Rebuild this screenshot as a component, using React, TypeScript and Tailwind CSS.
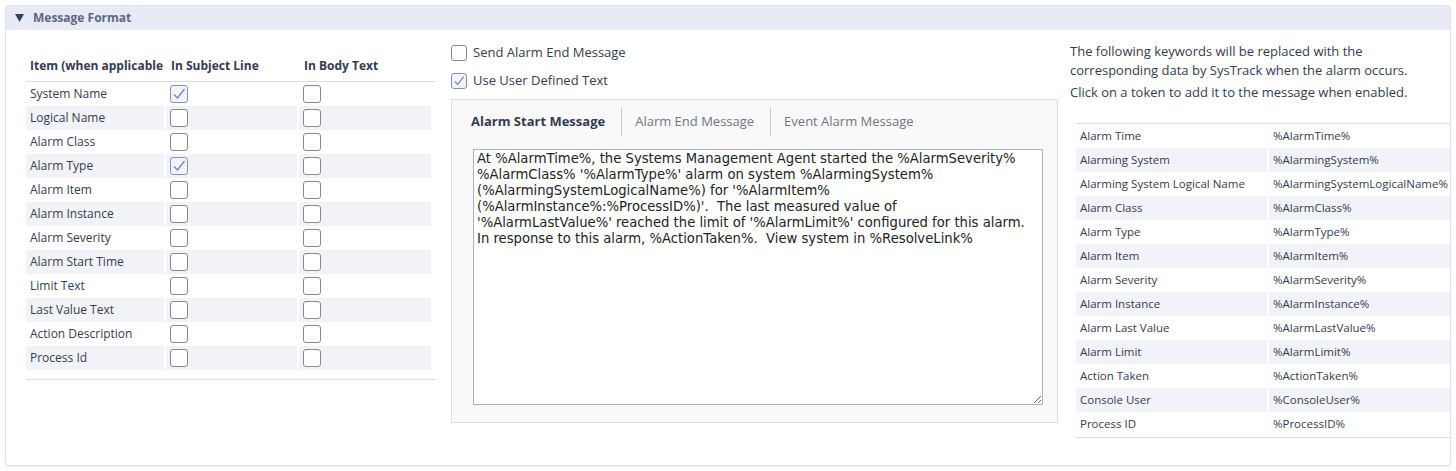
import React from 'react';

const items = [
  { name: 'System Name', subject: true },
  { name: 'Logical Name', subject: false },
  { name: 'Alarm Class', subject: false },
  { name: 'Alarm Type', subject: true },
  { name: 'Alarm Item', subject: false },
  { name: 'Alarm Instance', subject: false },
  { name: 'Alarm Severity', subject: false },
  { name: 'Alarm Start Time', subject: false },
  { name: 'Limit Text', subject: false },
  { name: 'Last Value Text', subject: false },
  { name: 'Action Description', subject: false },
  { name: 'Process Id', subject: false },
];

const tokens = [
  ['Alarm Time', '%AlarmTime%'],
  ['Alarming System', '%AlarmingSystem%'],
  ['Alarming System Logical Name', '%AlarmingSystemLogicalName%'],
  ['Alarm Class', '%AlarmClass%'],
  ['Alarm Type', '%AlarmType%'],
  ['Alarm Item', '%AlarmItem%'],
  ['Alarm Severity', '%AlarmSeverity%'],
  ['Alarm Instance', '%AlarmInstance%'],
  ['Alarm Last Value', '%AlarmLastValue%'],
  ['Alarm Limit', '%AlarmLimit%'],
  ['Action Taken', '%ActionTaken%'],
  ['Console User', '%ConsoleUser%'],
  ['Process ID', '%ProcessID%'],
];

const message =
  "At %AlarmTime%, the Systems Management Agent started the %AlarmSeverity%\n" +
  "%AlarmClass% '%AlarmType%' alarm on system %AlarmingSystem%\n" +
  "(%AlarmingSystemLogicalName%) for '%AlarmItem%\n" +
  "(%AlarmInstance%:%ProcessID%)'.  The last measured value of\n" +
  "'%AlarmLastValue%' reached the limit of '%AlarmLimit%' configured for this alarm.\n" +
  "In response to this alarm, %ActionTaken%.  View system in %ResolveLink%";

function Box({ checked, size = 18 }: { checked: boolean; size?: number }) {
  return (
    <div
      className={
        'flex items-center justify-center rounded-[3px] border-[1.5px] ' +
        (checked ? 'border-[#8391c0] bg-[#f3f4fa]' : 'border-[#888888] bg-white')
      }
      style={{ width: size, height: size }}
    >
      {checked && (
        <svg width={size - 4} height={size - 4} viewBox="0 0 14 14" fill="none">
          <path d="M2 7.5 L5.5 11 L12.5 2" stroke="#7385c0" strokeWidth="1.4" />
        </svg>
      )}
    </div>
  );
}

export default function App() {
  return (
    <div className="w-[1456px] h-[471px] bg-white pt-[5px] pl-[5px] text-[#353b50]" style={{ fontFamily: '"Open Sans", sans-serif' }}>
      <div className="w-[1446px] h-[461px] border border-[#e2e2e2] rounded-[3px] shadow-[0_1px_2px_rgba(0,0,0,0.08)] overflow-hidden">
        {/* Header */}
        <div className="h-[24px] bg-[#e8ebf5] flex items-center pl-[9px] gap-[9px]">
          <svg width="9" height="8" viewBox="0 0 9 8">
            <polygon points="0,0 9,0 4.5,8" fill="#3a4055" />
          </svg>
          <span className="text-[12px] font-bold text-[#5d6681]">Message Format</span>
        </div>

        <div className="flex">
          {/* Left: item table */}
          <div className="w-[410px] ml-[20px] mt-[20px]">
            <div className="grid grid-cols-[138px_131px_132px] gap-x-[2px] h-[32px] items-center border-b border-[#dcdcdc] text-[12px] font-bold">
              <div className="pl-[4px] whitespace-nowrap overflow-hidden">Item (when applicable</div>
              <div className="pl-[5px]">In Subject Line</div>
              <div className="pl-[5px]">In Body Text</div>
            </div>
            {items.map((it, i) => {
              const bg = i % 2 === 1 ? 'bg-[#f2f3f8]' : 'bg-white';
              return (
                <div key={it.name} className="grid grid-cols-[138px_131px_132px] gap-x-[2px] h-[24px] text-[12px]">
                  <div className={bg + ' pl-[4px] flex items-center'}>{it.name}</div>
                  <div className={bg + ' pl-[4px] flex items-center'}>
                    <Box checked={it.subject} />
                  </div>
                  <div className={bg + ' pl-[4px] flex items-center'}>
                    <Box checked={false} />
                  </div>
                </div>
              );
            })}
            <div className="mt-[9px] border-t border-[#dcdcdc]" />
          </div>

          {/* Middle: message editor */}
          <div className="w-[607px] ml-[15px] mt-[9px]">
            <div className="h-[28px] flex items-center gap-[6px] text-[13px]">
              <Box checked={false} size={16} />
              <span>Send Alarm End Message</span>
            </div>
            <div className="h-[28px] flex items-center gap-[6px] text-[13px]">
              <Box checked={true} size={16} />
              <span>Use User Defined Text</span>
            </div>
            <div className="mt-[4px] h-[324px] bg-[#f9f9f9] border border-[#dddddd] pt-[7px]">
              <div className="flex pl-[6px] h-[30px] text-[13px]">
                <div className="pl-[13px] pr-[16px] flex items-center font-bold">Alarm Start Message</div>
                <div className="pl-[13px] pr-[16px] flex items-center border-l border-[#c9cedb] text-[#6f7588]">Alarm End Message</div>
                <div className="pl-[13px] pr-[16px] flex items-center border-l border-[#c9cedb] text-[#6f7588]">Event Alarm Message</div>
              </div>
              <textarea
                readOnly
                value={message}
                className="block mt-[12px] ml-[21px] w-[570px] h-[256px] border border-[#a9b2c6] bg-white px-[3px] py-[1px] text-[13.2px] leading-[16px] text-[#222] outline-none resize"
                style={{ fontFamily: '"DejaVu Sans", Verdana, sans-serif' }}
              />
            </div>
          </div>

          {/* Right: tokens */}
          <div className="ml-[12px] mt-[12px] flex-1">
            <p className="text-[13px] leading-[19px]">
              The following keywords will be replaced with the
              <br />
              corresponding data by SysTrack when the alarm occurs.
            </p>
            <p className="mt-[3px] text-[13px] leading-[19px] whitespace-nowrap">Click on a token to add it to the message when enabled.</p>
            <div className="mt-[21px] ml-[6px] border-t border-b border-[#dcdcdc] pb-[1px]">
              {tokens.map(([label, tok], i) => {
                const bg = i % 2 === 1 ? 'bg-[#f2f3f8]' : 'bg-white';
                return (
                  <div key={tok} className="grid grid-cols-[191px_1fr] gap-x-[2px] h-[24px] text-[11.5px]">
                    <div className={bg + ' pl-[4px] flex items-center whitespace-nowrap'}>{label}</div>
                    <div className={bg + ' pl-[4px] flex items-center whitespace-nowrap'}>{tok}</div>
                  </div>
                );
              })}
            </div>
          </div>
        </div>
      </div>
    </div>
  );
}
